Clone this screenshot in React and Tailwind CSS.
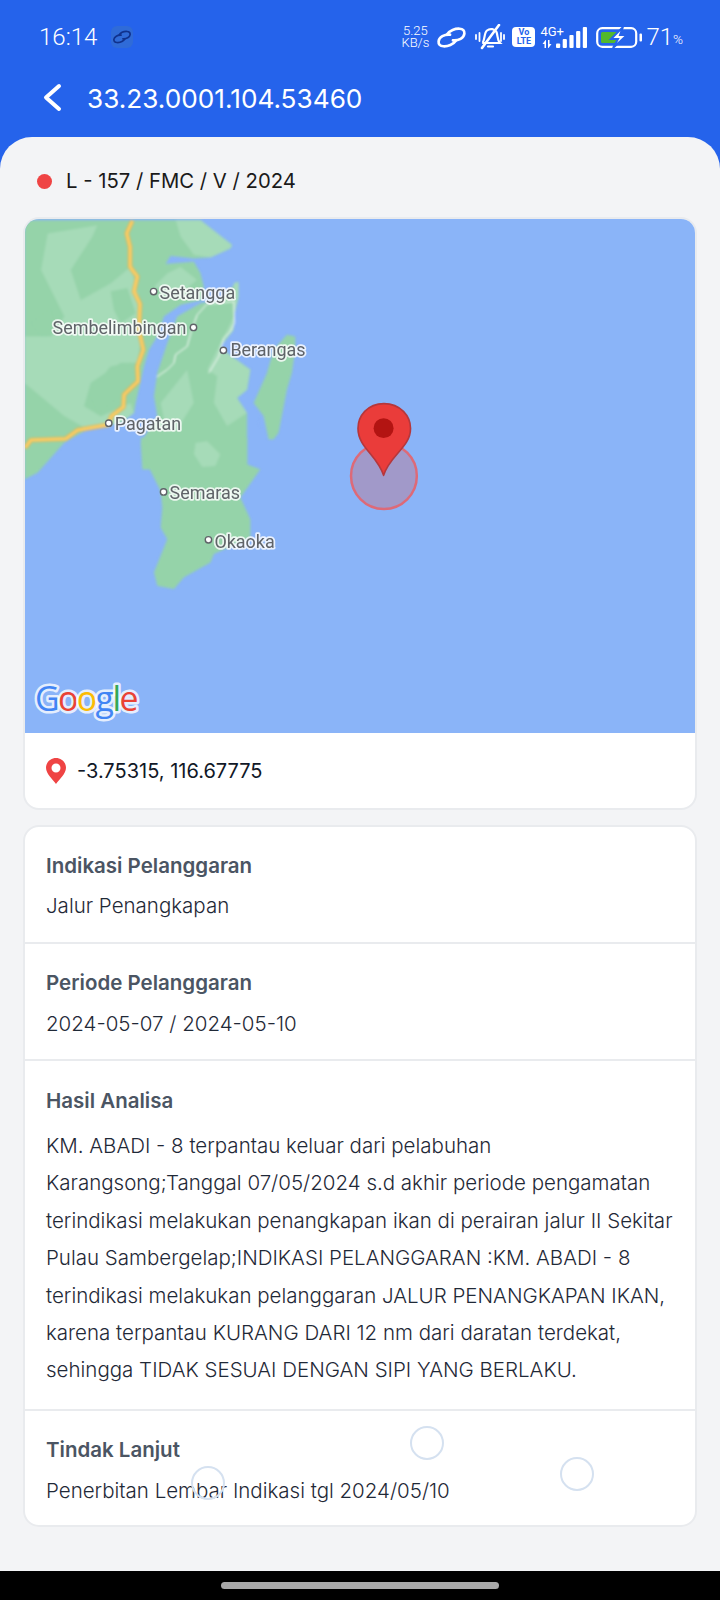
const Sea = "#8ab4f8";
const G1 = "#95d3a9";
const G2 = "#a6dbb8";

function MapLabel({ x, y, children, anchor = "start" }) {
  return (
    <text x={x} y={y} textAnchor={anchor} fontFamily="Roboto, sans-serif" fontSize="18" fill="#5f6368" stroke="#ffffff" strokeOpacity="0.8" strokeWidth="3.5" paintOrder="stroke" strokeLinejoin="round">
      {children}
    </text>
  );
}
function Dot({ x, y }) {
  return <circle cx={x} cy={y} r="3.2" fill="#ffffff" stroke="#5f6368" strokeWidth="1.4" />;
}

const road = "335,12 318,50 328,90 328,150 350,180 340,225 358,262 355,340 368,400 350,450 352,495 310,535 308,572 272,600 262,626 170,642 135,668 30,672 12,695";

function MapView() {
  return (
    <svg viewBox="24 218 672 514" className="block w-full h-[514px]" style={{ background: Sea }}>
      <g className="blur-[1px]">
        <g transform="translate(20 215) scale(0.33333)">
          <polygon fill={G1} points="10,10 540,10 635,85 630,95 570,122 520,125 450,118 435,142 520,135 540,170 550,210 545,250 480,265 430,300 410,360 385,400 370,450 345,560 340,590 300,620 200,640 130,680 50,770 10,790" />
          <polygon fill={G2} points="465,10 540,10 635,85 630,95 570,122 520,115 480,60" />
          <polygon fill={G2} points="80,50 230,25 215,60 150,160 180,250 270,200 330,150 360,260 360,380 350,440 300,440 210,500 190,570 240,600 330,560 340,590 300,620 200,640 130,600 10,500 10,360 90,360 130,300 60,160" />
          <polygon fill={G2} points="440,170 480,150 530,190 500,215 430,225 400,210" />
          <polygon fill={G1} points="30,320 90,275 110,350 60,360" />
          <polygon fill={G1} points="270,225 320,215 345,290 300,320 280,280" />
          <polygon fill={G1} points="205,530 270,450 330,440 345,490 300,540 230,590" />
          <polygon fill={G1} points="540,260 600,250 650,195 655,240 640,300 640,340 600,390 620,410 690,460 680,520 650,545 680,590 680,760 365,760 360,680 410,600 400,540 410,470 440,380 470,300" />
          <polygon fill={G2} points="640,200 655,195 655,240 640,300 640,340 600,390 620,410 690,460 680,520 650,545 680,590 620,630 580,560 590,480 560,460 640,300" />
          <polygon fill={G2} points="420,560 500,460 520,560 470,640 430,610" />
          <polygon fill={G1} points="800,355 825,360 825,400 815,470 800,520 775,650 760,670 745,670 730,600 700,560 740,470 760,400" />
          <polygon fill={Sea} points="717,610 730,612 730,630 718,628" />
          <polyline fill="none" stroke="#ffffff" strokeWidth="3" points="408,482 440,460 460,440 465,415 500,390 512,345 530,295 560,262 640,255 642,320 630,345 610,365 595,420 565,470" />
          <polyline fill="none" stroke="#e8b34a" strokeWidth="13" strokeLinejoin="round" points={road} />
          <polyline fill="none" stroke="#fcd06a" strokeWidth="8" strokeLinejoin="round" points={road} />
        </g>
        <g transform="translate(20 440) scale(0.33333)">
          <polygon fill={G1} points="360,-10 680,-10 680,70 720,85 660,170 690,235 690,290 580,340 570,365 490,410 460,445 410,435 400,395 440,295 420,260 425,200 420,150 370,50" />
          <polygon fill={G2} points="525,5 560,0 600,40 585,75 545,78 520,40" />
        </g>
      </g>
      <Dot x={153} y={290} />
      <MapLabel x={159} y={297}>Setangga</MapLabel>
      <Dot x={193} y={326} />
      <MapLabel x={186} y={333} anchor="end">Sembelimbingan</MapLabel>
      <Dot x={223} y={349} />
      <MapLabel x={230} y={355}>Berangas</MapLabel>
      <Dot x={108} y={422} />
      <MapLabel x={114} y={429}>Pagatan</MapLabel>
      <Dot x={163} y={491} />
      <MapLabel x={169} y={498}>Semaras</MapLabel>
      <Dot x={208} y={539} />
      <MapLabel x={214} y={547}>Okaoka</MapLabel>

      <circle cx="384" cy="475" r="33" fill="#ea4335" fillOpacity="0.24" stroke="#dd6a78" strokeWidth="2.5" />
      <g transform="translate(330 389) scale(0.33333)">
        <path d="M162 40 C112 40 84 78 84 115 C84 172 142 195 161 256 C180 195 242 172 242 115 C242 78 212 40 162 40 Z" fill="#ea3c3a" stroke="#b5373b" strokeWidth="5" strokeLinejoin="round" />
        <circle cx="161" cy="114" r="30" fill="#b31412" />
      </g>

      <text x="34" y="711" fontFamily="'Open Sans', Roboto, sans-serif" fontSize="34" fontWeight="500" letterSpacing="-1.6" stroke="#ffffff" strokeOpacity="0.8" strokeWidth="5" paintOrder="stroke" strokeLinejoin="round">
        <tspan fill="#4285f4">G</tspan>
        <tspan fill="#ea4335">o</tspan>
        <tspan fill="#fbbc04">o</tspan>
        <tspan fill="#4285f4">g</tspan>
        <tspan fill="#34a853">l</tspan>
        <tspan fill="#ea4335">e</tspan>
      </text>
    </svg>
  );
}

function LinkGlyph({ className, color = "#ffffff", sw = 2.8 }) {
  return (
    <svg viewBox="0 0 30 22" className={className} fill="none" stroke={color} strokeWidth={sw} strokeLinecap="round">
      <path d="M10 8 C13 3.5 19 1.5 23.5 1.8 C27 2 28.8 4 28.5 7 C28 11.5 22.5 14.5 16.5 14" />
      <path d="M20 14 C17 18.5 11 20.5 6.5 20.2 C3 20 1.2 18 1.5 15 C2 10.5 7.5 7.5 13.5 8" />
    </svg>
  );
}

function StatusBar() {
  return (
    <div className="h-[74px] flex items-center pl-[39px] pr-[37px] text-white" style={{ fontFamily: "Roboto, sans-serif" }}>
      <span className="text-[24px] font-light leading-none">16:14</span>
      <span className="ml-[14px] w-[22px] h-[22px] rounded-[6px] bg-[#2f6bd8] flex items-center justify-center">
        <LinkGlyph className="w-[18px] h-[14px]" color="#10318c" />
      </span>
      <div className="ml-auto flex items-center">
        <div className="text-[13px] leading-[12px] font-light text-center w-[28px]">
          <div>5.25</div>
          <div>KB/s</div>
        </div>
        <LinkGlyph className="ml-[8px] w-[29px] h-[21px]" />
        <svg viewBox="0 0 30 26" className="ml-[9px] w-[30px] h-[26px]" fill="none" stroke="#ffffff" strokeWidth="2.2" strokeLinecap="round">
          <path d="M8 18 C10 15 9 9 12 6.5 C15 4 20 5 21.5 8 C23 12 22 16 25 19 L8 19" />
          <path d="M13 22.5 H18" />
          <path d="M24 1 L7 24" strokeWidth="2.6" />
          <path d="M1 11 V15 M4.5 9 V17 M26 9 V17 M29 11 V15" strokeWidth="1.8" />
        </svg>
        <div className="ml-[7px] w-[23px] h-[20px] bg-white rounded-[4px] flex flex-col items-center justify-center text-[#2563eb] text-[9px] font-bold leading-[9px]">
          <span>Vo</span>
          <span>LTE</span>
        </div>
        <div className="ml-[5px] w-[26px] flex flex-col items-start">
          <span className="text-[13px] leading-[12px] font-normal">4G+</span>
          <svg viewBox="0 0 10 8" className="w-[10px] h-[8px] ml-[2px] mt-[2px]" fill="#ffffff">
            <path d="M3.5 0 L0.5 4 H2.5 V8 H4 V0 Z M6.5 8 L9.5 4 H7.5 V0 H6 V8 Z" />
          </svg>
        </div>
        <svg viewBox="0 0 31 21" className="-ml-[10px] w-[31px] h-[21px]" fill="#ffffff">
          <rect x="0" y="16.5" width="4.2" height="4.5" rx="1" />
          <rect x="6.7" y="12" width="4.2" height="9" rx="1" />
          <rect x="13.4" y="8" width="4.2" height="13" rx="1" />
          <rect x="20.1" y="4" width="4.2" height="17" rx="1" />
          <rect x="26.8" y="0" width="4.2" height="21" rx="1" />
        </svg>
        <svg viewBox="0 0 46 21" className="ml-[9px] w-[46px] h-[21px]" fill="none">
          <rect x="1.2" y="1.2" width="39" height="18.6" rx="5" stroke="#ffffff" strokeWidth="2.2" />
          <rect x="5" y="5" width="19" height="11" rx="1.5" fill="#52b82d" />
          <path d="M27 0 L15 12 H22 L17 21 L31 8 H24 Z" fill="#ffffff" stroke="#2563eb" strokeWidth="2" />
          <rect x="43.5" y="6.5" width="2.5" height="8" rx="1" fill="#ffffff" />
        </svg>
        <span className="ml-[4px] text-[24px] font-light leading-none">71</span>
        <span className="text-[13.5px] font-light leading-none mt-[6px]">%</span>
      </div>
    </div>
  );
}

function Row({ label, children, className = "" }) {
  return (
    <div className={`px-[21px] border-t-2 first:border-t-0 border-[#e9ebee] ${className}`}>
      <div className="text-[20.5px] font-semibold text-[#4b5563] leading-[30px]">{label}</div>
      {children}
    </div>
  );
}

export default function App() {
  return (
    <div className="w-[720px] h-[1600px] flex flex-col bg-[#2563eb]" style={{ fontFamily: "Inter, sans-serif" }}>
      <StatusBar />
      <div className="h-[63px] flex items-start pl-[42px]">
        <svg viewBox="0 0 20 30" className="w-[20px] h-[30px] mt-[9px]" fill="none" stroke="#ffffff" strokeWidth="4" strokeLinecap="round" strokeLinejoin="round">
          <path d="M17 3 L4 14.5 L17 26" />
        </svg>
        <span className="ml-[25px] pt-[2px] text-[26.2px] text-white leading-[46px]">33.23.0001.104.53460</span>
      </div>
      <div className="flex-1 bg-[#f3f4f6] rounded-t-[32px] px-[23px] relative">
        <div className="h-[80px] flex items-center pl-[14px] pt-[9px]">
          <span className="w-[15px] h-[15px] rounded-full bg-[#ef4444]"></span>
          <span className="ml-[14px] text-[20.3px] text-[#1a1a1a]">L - 157 / FMC / V / 2024</span>
        </div>
        <div className="border-2 border-[#e9ebee] rounded-[16px] bg-white overflow-hidden">
          <MapView />
          <div className="h-[75px] flex items-center pl-[21px]">
            <svg viewBox="0 0 20 26" className="w-[20px] h-[26px]">
              <path fillRule="evenodd" fill="#ef4444" d="M10 0 C4.5 0 0 4.4 0 9.8 C0 16 7 21.5 10 26 C13 21.5 20 16 20 9.8 C20 4.4 15.5 0 10 0 Z M10 5.5 A4.5 4.5 0 1 1 10 14.5 A4.5 4.5 0 1 1 10 5.5 Z" />
            </svg>
            <span className="ml-[11px] text-[20px] text-[#111827]">-3.75315, 116.67775</span>
          </div>
        </div>
        <div className="mt-[15px] border-2 border-[#e9ebee] rounded-[16px] bg-white">
          <Row label="Indikasi Pelanggaran" className="h-[115px] pt-[24px]">
            <div className="mt-[9px] text-[20.5px] font-light text-[#1f2937] leading-[32px]">Jalur Penangkapan</div>
          </Row>
          <Row label="Periode Pelanggaran" className="h-[117px] pt-[24px]">
            <div className="mt-[10px] text-[20.5px] font-light text-[#1f2937] leading-[32px]">2024-05-07 / 2024-05-10</div>
          </Row>
          <Row label="Hasil Analisa" className="h-[350px] pt-[25px]">
            <p className="mt-[11px] text-[20.5px] font-light text-[#1f2937] leading-[37.4px]">
              KM. ABADI - 8 terpantau keluar dari pelabuhan Karangsong;Tanggal 07/05/2024 s.d akhir periode pengamatan terindikasi melakukan penangkapan ikan di perairan jalur II Sekitar Pulau Sambergelap;INDIKASI PELANGGARAN :KM. ABADI - 8 terindikasi melakukan pelanggaran JALUR PENANGKAPAN IKAN, karena terpantau KURANG DARI 12 nm dari daratan terdekat, sehingga TIDAK SESUAI DENGAN SIPI YANG BERLAKU.
            </p>
          </Row>
          <Row label="Tindak Lanjut" className="h-[116px] pt-[24px]">
            <div className="mt-[10px] text-[20.5px] font-light text-[#1f2937] leading-[32px]">Penerbitan Lembar Indikasi tgl 2024/05/10</div>
          </Row>
        </div>
        <span className="absolute left-[191px] top-[1329px] w-[34px] h-[34px] rounded-full border-2 border-[#d5e1f0]"></span>
        <span className="absolute left-[410px] top-[1289px] w-[34px] h-[34px] rounded-full border-2 border-[#d5e1f0]"></span>
        <span className="absolute left-[560px] top-[1320px] w-[34px] h-[34px] rounded-full border-2 border-[#d5e1f0]"></span>
      </div>
      <div className="h-[29px] bg-black flex items-start justify-center pt-[11px]">
        <div className="w-[278px] h-[7px] rounded-full bg-[#a8a8a8]"></div>
      </div>
    </div>
  );
}
